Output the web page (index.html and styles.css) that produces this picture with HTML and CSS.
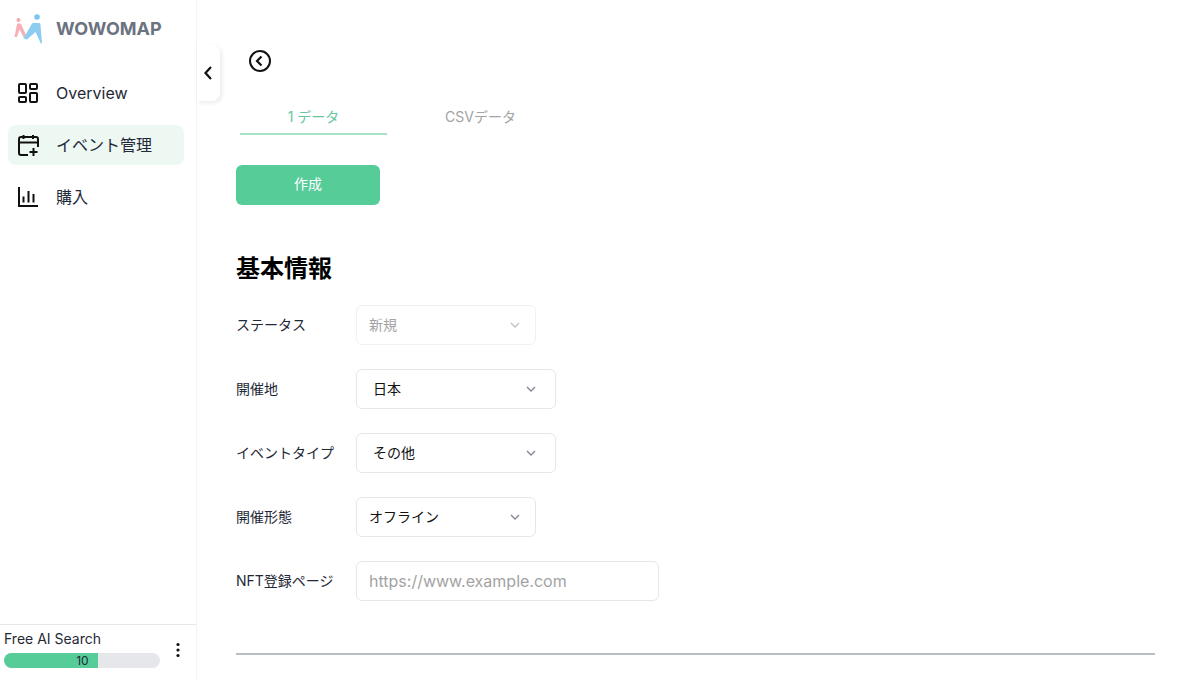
FILE: index.html
```html
<!DOCTYPE html>
<html lang="ja">
<head>
<meta charset="utf-8">
<title>WOWOMAP</title>
<link rel="stylesheet" href="styles.css">
</head>
<body>
<div class="app">
  <aside class="sidebar">
    <div class="brand">
      <svg class="logo" width="30" height="32" viewBox="0 0 30 32">
        <circle cx="4.500" cy="6" r="2" fill="#f4a9b0"/>
        <path d="M0.500 23 L3 10 Q5 8.500 7 10 L12 21 L10 24 L5.500 15.500 L3 23Z" fill="#f7b0b6"/>
        <circle cx="23" cy="3" r="2.800" fill="#7cc6ee"/>
        <path d="M9.500 24.500 L18 9.500 Q19.500 8.500 21 9 L25.500 9 Q26.500 9.300 26.500 11 L28 29 L26.800 29.500 L21.500 18 L13 25.500Z" fill="#8ccdf1"/>
      </svg>
      <span class="brand-name">WOWOMAP</span>
    </div>
    <nav class="nav">
      <a class="nav-item">
        <svg class="nav-icon" viewBox="0 0 24 24" fill="none" stroke="#111" stroke-width="2"><rect x="3" y="3" width="7" height="9" rx="1"/><rect x="14" y="3" width="7" height="5" rx="1"/><rect x="14" y="12" width="7" height="9" rx="1"/><rect x="3" y="16" width="7" height="5" rx="1"/></svg>
        <span>Overview</span>
      </a>
      <a class="nav-item active">
        <svg class="nav-icon" viewBox="0 0 24 24" fill="none" stroke="#111" stroke-width="2"><path d="M12 22H5a2 2 0 0 1-2-2V6a2 2 0 0 1 2-2h15a2 2 0 0 1 2 2v8"/><path d="M3 9.600h19M7.500 2v4M17 2v4M17.500 15v8M13.500 19h8"/></svg>
        <span class="cjk">イベント管理</span>
      </a>
      <a class="nav-item">
        <svg class="nav-icon" viewBox="0 0 24 24" fill="none" stroke="#111" stroke-width="2"><path d="M3 2v19h19"/><path d="M7.500 17.500v-6M12.500 17.500V6M17.500 17.500V9"/></svg>
        <span class="cjk">購入</span>
      </a>
    </nav>
    <div class="quota">
      <div class="quota-info">
        <div class="quota-title">Free AI Search</div>
        <div class="quota-track"><div class="quota-fill">10</div></div>
      </div>
      <svg class="quota-more" width="4" height="16" viewBox="0 0 4 16" fill="#111"><circle cx="2" cy="2.500" r="1.600"/><circle cx="2" cy="8" r="1.600"/><circle cx="2" cy="13.500" r="1.600"/></svg>
    </div>
  </aside>
  <button class="collapse" type="button" aria-label="collapse">
    <svg width="10" height="16" viewBox="0 0 10 16" fill="none" stroke="#111" stroke-width="2.200"><path d="M8 2 L2.500 8 L8 14"/></svg>
  </button>
  <main class="main">
    <svg class="back" width="24" height="24" viewBox="0 0 24 24" fill="none" stroke="#111" stroke-width="2"><circle cx="12" cy="12" r="10"/><path d="M13.500 7.500 L9 12 L13.500 16.500" stroke-width="2.200"/></svg>
    <div class="tabs">
      <div class="tab active"><span class="digit">1</span>データ</div>
      <div class="tab">CSVデータ</div>
    </div>
    <button class="create" type="button">作成</button>
    <h2 class="heading">基本情報</h2>
    <div class="form">
      <div class="row">
        <label class="label">ステータス</label>
        <div class="select w180 disabled"><span class="value">新規</span><svg class="chev" viewBox="0 0 10 6" fill="none" stroke-width="1.300"><path d="M1 1 L5 5 L9 1"/></svg></div>
      </div>
      <div class="row">
        <label class="label">開催地</label>
        <div class="select w200"><span class="value">日本</span><svg class="chev" viewBox="0 0 10 6" fill="none" stroke-width="1.300"><path d="M1 1 L5 5 L9 1"/></svg></div>
      </div>
      <div class="row">
        <label class="label">イベントタイプ</label>
        <div class="select w200"><span class="value">その他</span><svg class="chev" viewBox="0 0 10 6" fill="none" stroke-width="1.300"><path d="M1 1 L5 5 L9 1"/></svg></div>
      </div>
      <div class="row">
        <label class="label">開催形態</label>
        <div class="select w180"><span class="value">オフライン</span><svg class="chev" viewBox="0 0 10 6" fill="none" stroke-width="1.300"><path d="M1 1 L5 5 L9 1"/></svg></div>
      </div>
      <div class="row">
        <label class="label">NFT登録ページ</label>
        <input class="input" type="text" placeholder="https://www.example.com">
      </div>
    </div>
    <hr class="rule">
  </main>
</div>
</body>
</html>
```
FILE: styles.css
```css
* { box-sizing: border-box; }
html, body { margin: 0; height: 100%; overflow: hidden; background: #fff; }
body { font-family: Inter, "Noto Sans CJK JP", sans-serif; color: #111; }
.app { display: flex; height: 680px; position: relative; }
.sidebar { width: 197px; flex: none; border-right: 1px solid #f3f4f6; display: flex; flex-direction: column; }
.brand { height: 56px; padding-left: 14px; display: flex; align-items: center; gap: 12px; }
.logo { flex: none; margin-top: 4px; }
.brand-name { font-size: 18px; font-weight: 700; color: #6b7280; }
.nav { padding: 17px 12px 0 8px; display: flex; flex-direction: column; gap: 12px; }
.nav-item { height: 40px; border-radius: 8px; padding: 0 8px; display: flex; align-items: center; gap: 16px; font-size: 16px; color: #1f2937; }
.nav-item.active { background: #eef8f3; }
.nav-icon { width: 24px; height: 24px; flex: none; }
.cjk { padding-bottom: 2px; }
.quota { margin-top: auto; height: 56px; border-top: 1px solid #e5e7eb; padding: 6px 15px 0 4px; display: flex; align-items: flex-start; gap: 16px; }
.quota-info { width: 156px; }
.quota-title { font-size: 14px; line-height: 15px; color: #1f2937; margin-bottom: 7px; }
.quota-track { height: 15px; border-radius: 8px; background: #e5e7eb; overflow: hidden; }
.quota-fill { width: 60%; height: 100%; background: #56cc99; font-size: 12px; line-height: 15px; text-align: right; padding-right: 9px; color: #1f2937; }
.quota-more { flex: none; margin-top: 11px; }
.collapse { position: absolute; left: 197px; top: 45px; width: 23px; height: 56px; border: 0; padding: 0 1px 0 0; background: #fff; border-radius: 0 8px 8px 0; box-shadow: 2px 2px 4px rgba(0,0,0,.08); display: flex; align-items: center; justify-content: center; }
.main { flex: 1; min-width: 0; padding: 49px 35px 0 39px; }
.back { display: block; margin-left: 12px; }
.tabs { display: flex; gap: 20px; margin: 30px 0 0 4px; }
.tab { width: 147px; height: 32px; font-size: 14px; line-height: 28px; text-align: center; color: #a3a3a3; }
.tab.active { color: #65c6a0; border-bottom: 2px solid #a9e0c8; }
.digit { padding-right: 4px; }
.create { display: block; width: 144px; height: 40px; margin-top: 30px; padding: 0 0 5px; border: 0; border-radius: 6px; background: #56cc99; color: #fff; font: 400 14px Inter, "Noto Sans CJK JP", sans-serif; }
.heading { margin: 48px 0 0; font-size: 24px; line-height: 32px; font-weight: 700; color: #000; }
.form { margin-top: 20px; display: flex; flex-direction: column; gap: 24px; }
.row { display: flex; align-items: center; height: 40px; }
.label { width: 120px; flex: none; padding-bottom: 2px; font-size: 14px; color: #1f2937; }
.select { height: 40px; border: 1px solid #e5e7eb; border-radius: 6px; display: flex; align-items: center; justify-content: space-between; padding: 0 15px 0 12px; font-size: 14px; color: #111; background: #fff; }
.value { padding-bottom: 2px; }
.w180 { width: 180px; }
.w200 { width: 200px; padding: 0 19px 0 16px; }
.select.disabled { border-color: #f0f1f3; color: #a3a3a3; }
.chev { width: 10px; height: 6px; stroke: #808590; }
.disabled .chev { stroke: #bdc0c6; }
.input { width: 303px; height: 40px; border: 1px solid #e5e7eb; border-radius: 6px; padding: 0 12px; font: 16px Inter, "Noto Sans CJK JP", sans-serif; color: #111; outline: none; }
.input::placeholder { color: #a3a3a3; opacity: 1; }
.rule { margin: 52px 0 0; border: 0; height: 2px; background: #b6c0c4; }
```
